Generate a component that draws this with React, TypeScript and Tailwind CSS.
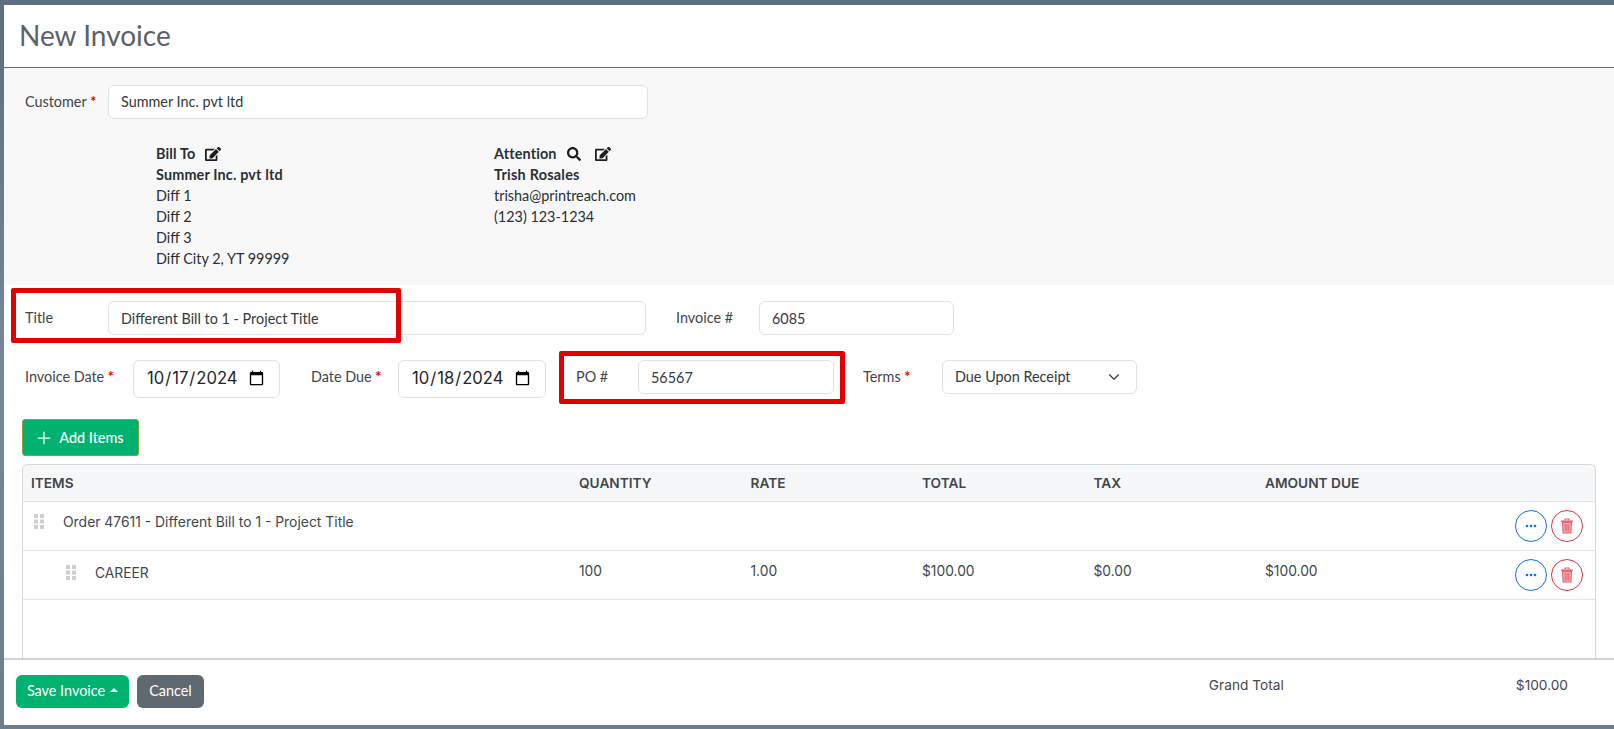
import { FaEdit, FaSearch } from 'react-icons/fa';
import { ChevronDown, Plus } from 'lucide-react';

const inputClass =
  'h-[34px] rounded-md border border-[#dee2e6] bg-white px-3 text-[14.4px] text-[#333a40] outline-none';
const labelClass = 'text-[14.4px] text-[#3f464c]';

const Req = () => <span className="font-bold text-[#f00000]"> *</span>;

const Grip = () => (
  <svg width="11" height="15" viewBox="0 0 11 15" fill="#cfcfcf" className="mb-[2px] shrink-0">
    <rect x="0" y="0" width="4" height="4" />
    <rect x="6" y="0" width="4" height="4" />
    <rect x="0" y="5.5" width="4" height="4" />
    <rect x="6" y="5.5" width="4" height="4" />
    <rect x="0" y="11" width="4" height="4" />
    <rect x="6" y="11" width="4" height="4" />
  </svg>
);

const Trash = () => (
  <svg width="14" height="16" viewBox="0 0 14 16" fill="none" stroke="#e4626f">
    <path d="M5 2.5V1h4v1.5" strokeWidth="1.2" />
    <path d="M1 3.2h12" strokeWidth="1.5" />
    <path d="M2.5 4.5h9l-.6 10.5H3.1z" fill="#f3aeb4" strokeWidth="1.1" />
    <path d="M5.2 6v7.5M7 6v7.5M8.8 6v7.5" strokeWidth="1" />
  </svg>
);

const RowActions = () => (
  <div className="flex gap-1">
    <button className="flex h-8 w-8 items-center justify-center rounded-full border border-[#0d6efd] bg-white">
      <svg width="12" height="4" viewBox="0 0 12 4" fill="#0d6efd">
        <circle cx="2" cy="2" r="1.3" />
        <circle cx="6" cy="2" r="1.3" />
        <circle cx="10" cy="2" r="1.3" />
      </svg>
    </button>
    <button className="flex h-8 w-8 items-center justify-center rounded-full border border-[#dc3545] bg-white">
      <Trash />
    </button>
  </div>
);

const DateField = ({ value }: { value: string }) => (
  <input
    type="date"
    defaultValue={value}
    className="h-[38px] w-full rounded-md border border-[#dee2e6] bg-white px-3 pb-[2px] text-[16.6px] text-[#212529] outline-none [font-family:Inter,sans-serif]"
  />
);

export default function App() {
  return (
    <div className="h-[729px] w-[1614px] overflow-hidden bg-gradient-to-b from-[#5e6e7f] via-[#76879a] to-[#6d7d8e] pb-[4px] pl-[4px] pt-[5px] [font-family:Lato,sans-serif]">
      <div className="relative flex h-full flex-col bg-white">
        <div className="flex h-[63px] items-center border-b border-[#1f8f70] px-[15px] pb-[2px]">
          <h1 className="text-[28px] font-normal text-[#5c6166]">New Invoice</h1>
        </div>

        <div className="h-[217px] bg-[#f8f8f8] px-[21px] pt-[17px]">
          <div className="flex items-center">
            <label className={`${labelClass} w-[83px] pb-[1px]`}>
              Customer<Req />
            </label>
            <input readOnly value="Summer Inc. pvt ltd" className={`${inputClass} w-[540px] pb-[2px]`} />
          </div>

          <div className="mt-[24px] flex pl-[131px] text-[14.4px] leading-[21px] text-[#2b3035]">
            <div className="w-[338px]">
              <div className="flex items-center gap-[10px] font-bold tracking-[0.15px]">
                Bill To <FaEdit size={16} className="text-[#1c1f22]" />
              </div>
              <div className="font-bold tracking-[0.15px]">Summer Inc. pvt ltd</div>
              <div>Diff 1</div>
              <div>Diff 2</div>
              <div>Diff 3</div>
              <div>Diff City 2, YT 99999</div>
            </div>
            <div>
              <div className="flex items-center font-bold tracking-[0.15px]">
                Attention
                <FaSearch size={14} className="ml-[10px] text-[#1c1f22]" />
                <FaEdit size={16} className="ml-[14px] text-[#1c1f22]" />
              </div>
              <div className="font-bold tracking-[0.25px]">Trish Rosales</div>
              <div>trisha@printreach.com</div>
              <div>(123) 123-1234</div>
            </div>
          </div>
        </div>

        <div className="flex flex-1 flex-col px-[18px]">
          <div className="mt-[16px] flex items-center pl-[3px]">
            <label className={`${labelClass} w-[83px]`}>Title</label>
            <input
              readOnly
              value="Different Bill to 1 - Project Title"
              className={`${inputClass} w-[538px]`}
            />
            <label className={`${labelClass} ml-[30px] w-[83px]`}>Invoice #</label>
            <input readOnly value="6085" className={`${inputClass} w-[195px]`} />
          </div>

          <div className="mt-[25px] flex items-start pl-[3px]">
            <label className={`${labelClass} mt-[6px] w-[108px]`}>
              Invoice Date<Req />
            </label>
            <div className="w-[147px]">
              <DateField value="2024-10-17" />
            </div>
            <label className={`${labelClass} ml-[31px] mt-[6px] w-[87px]`}>
              Date Due<Req />
            </label>
            <div className="w-[148px]">
              <DateField value="2024-10-18" />
            </div>
            <label className={`${labelClass} ml-[30px] mt-[6px] w-[62px]`}>PO #</label>
            <input readOnly value="56567" className={`${inputClass} w-[196px]`} />
            <label className={`${labelClass} ml-[29px] mt-[6px] w-[79px]`}>
              Terms<Req />
            </label>
            <div className="relative w-[195px]">
              <select className={`${inputClass} w-full appearance-none`} defaultValue="due">
                <option value="due">Due Upon Receipt</option>
              </select>
              <ChevronDown size={18} strokeWidth={1.5} className="absolute right-[14px] top-[8px] text-[#343a40]" />
            </div>
          </div>

          <button className="mt-[21px] flex h-[37px] w-[117px] items-center justify-center gap-[5px] rounded-[3px] border border-[#8f9d3f] bg-[#00b26f] pr-[3px] text-[14.4px] font-medium text-white">
            <Plus size={20} strokeWidth={1.5} />
            Add Items
          </button>

          <div className="mt-[8px] flex flex-1 flex-col overflow-hidden rounded-t-md border border-b-0 border-[#d5d7d9] [font-family:Inter,sans-serif]">
            <div className="grid h-[37px] shrink-0 grid-cols-[548px_171.5px_171.5px_171.5px_171.5px_1fr] items-center border-b border-[#e3e6e8] bg-[#f6f7f9] pl-[8px] text-[13.7px] font-semibold text-[#41474d]">
              <div>ITEMS</div>
              <div>QUANTITY</div>
              <div>RATE</div>
              <div>TOTAL</div>
              <div>TAX</div>
              <div>AMOUNT DUE</div>
            </div>

            <div className="flex h-[49px] shrink-0 items-start justify-between border-b border-[#e3e6e8] pr-[12px] text-[13.9px] text-[#41474d]">
              <div className="flex items-center gap-[18px] pl-[11px] pt-[10px]">
                <Grip />
                Order 47611 - Different Bill to 1 - Project Title
              </div>
              <div className="pt-[8px]">
                <RowActions />
              </div>
            </div>

            <div className="flex h-[49px] shrink-0 items-start border-b border-[#e3e6e8] pr-[12px] text-[13.8px] text-[#41474d]">
              <div className="flex w-[556px] items-center gap-[18px] pl-[43px] pt-[12px]">
                <Grip />
                CAREER
              </div>
              <div className="grid flex-1 grid-cols-[171.5px_171.5px_171.5px_171.5px_1fr] pt-[10px]">
                <div>100</div>
                <div>1.00</div>
                <div>$100.00</div>
                <div>$0.00</div>
                <div>$100.00</div>
              </div>
              <div className="pt-[8px]">
                <RowActions />
              </div>
            </div>
          </div>
        </div>

        <div className="flex h-[67px] shrink-0 items-center justify-between border-t-2 border-[#d4d4d4] pb-[3px] pl-[12px] pr-[46px]">
          <div className="flex gap-2">
            <button className="flex h-[33px] w-[113px] items-center justify-center gap-[5px] rounded-md bg-[#00b26f] text-[14.4px] text-white">
              Save Invoice
              <span className="mb-[2px] h-0 w-0 border-x-[4px] border-b-[4px] border-x-transparent border-b-white" />
            </button>
            <button className="h-[33px] w-[67px] rounded-md bg-[#5f696f] text-[14.4px] text-white">
              Cancel
            </button>
          </div>
          <div className="mb-[12px] flex text-[13.7px] text-[#41474d] [font-family:Inter,sans-serif]">
            <span className="w-[307px]">Grand Total</span>
            <span>$100.00</span>
          </div>
        </div>

        {/* annotation boxes drawn over the form */}
        <div className="pointer-events-none absolute left-[7px] top-[283px] h-[55px] w-[390px] rounded-[2px] border-[5px] border-[#e50000]" />
        <div className="pointer-events-none absolute left-[555px] top-[346px] h-[53px] w-[286px] rounded-[2px] border-[5px] border-[#e50000]" />
      </div>
    </div>
  );
}
